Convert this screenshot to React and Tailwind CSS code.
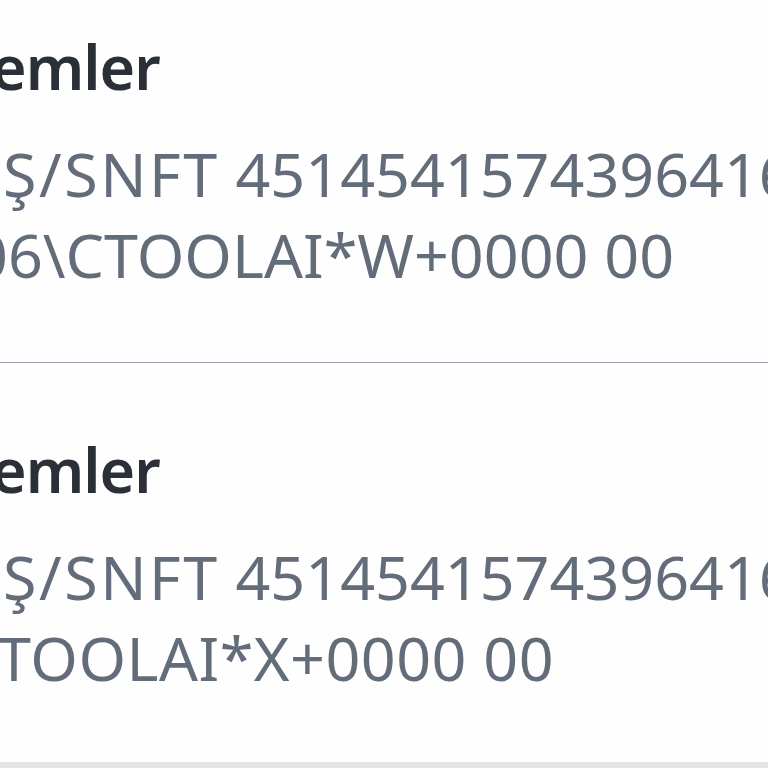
export default function App() {
  const font = { fontFamily: '"Noto Sans", "Open Sans", sans-serif' };
  return (
    <div className="w-[768px] h-[768px] overflow-hidden bg-[#fefefe] flex flex-col" style={font}>
      <div className="flex flex-col pt-[36px]">
        <div className="text-[61px] leading-[62px] font-semibold tracking-[-1px] text-[#2b3038] whitespace-nowrap ml-[-9px]">emler</div>
        <div className="mt-[35px] text-[61px] leading-[81px] text-[#636d7a] whitespace-nowrap ml-[3px]">
          <span className="tracking-[2.5px]">Ş/SNFT</span> 45145415743964169
        </div>
        <div className="text-[61px] leading-[81px] text-[#636d7a] whitespace-nowrap ml-[-27px]">06\CTOOLAI*W+0000 00</div>
      </div>
      <div className="mt-[67px] h-[2px] bg-[#98a4b0]"></div>
      <div className="flex flex-col pt-[76px]">
        <div className="text-[61px] leading-[62px] font-semibold tracking-[-1px] text-[#2b3038] whitespace-nowrap ml-[-9px]">emler</div>
        <div className="mt-[35px] text-[61px] leading-[81px] text-[#636d7a] whitespace-nowrap ml-[3px]">
          <span className="tracking-[2.5px]">Ş/SNFT</span> 45145415743964169
        </div>
        <div className="text-[61px] leading-[81px] text-[#636d7a] whitespace-nowrap ml-[-42px] tracking-[0.5px]">CTOOLAI*X+0000 00</div>
      </div>
      <div className="mt-[64px] h-[6px] bg-[#e1e3e7] shrink-0"></div>
    </div>
  );
}
